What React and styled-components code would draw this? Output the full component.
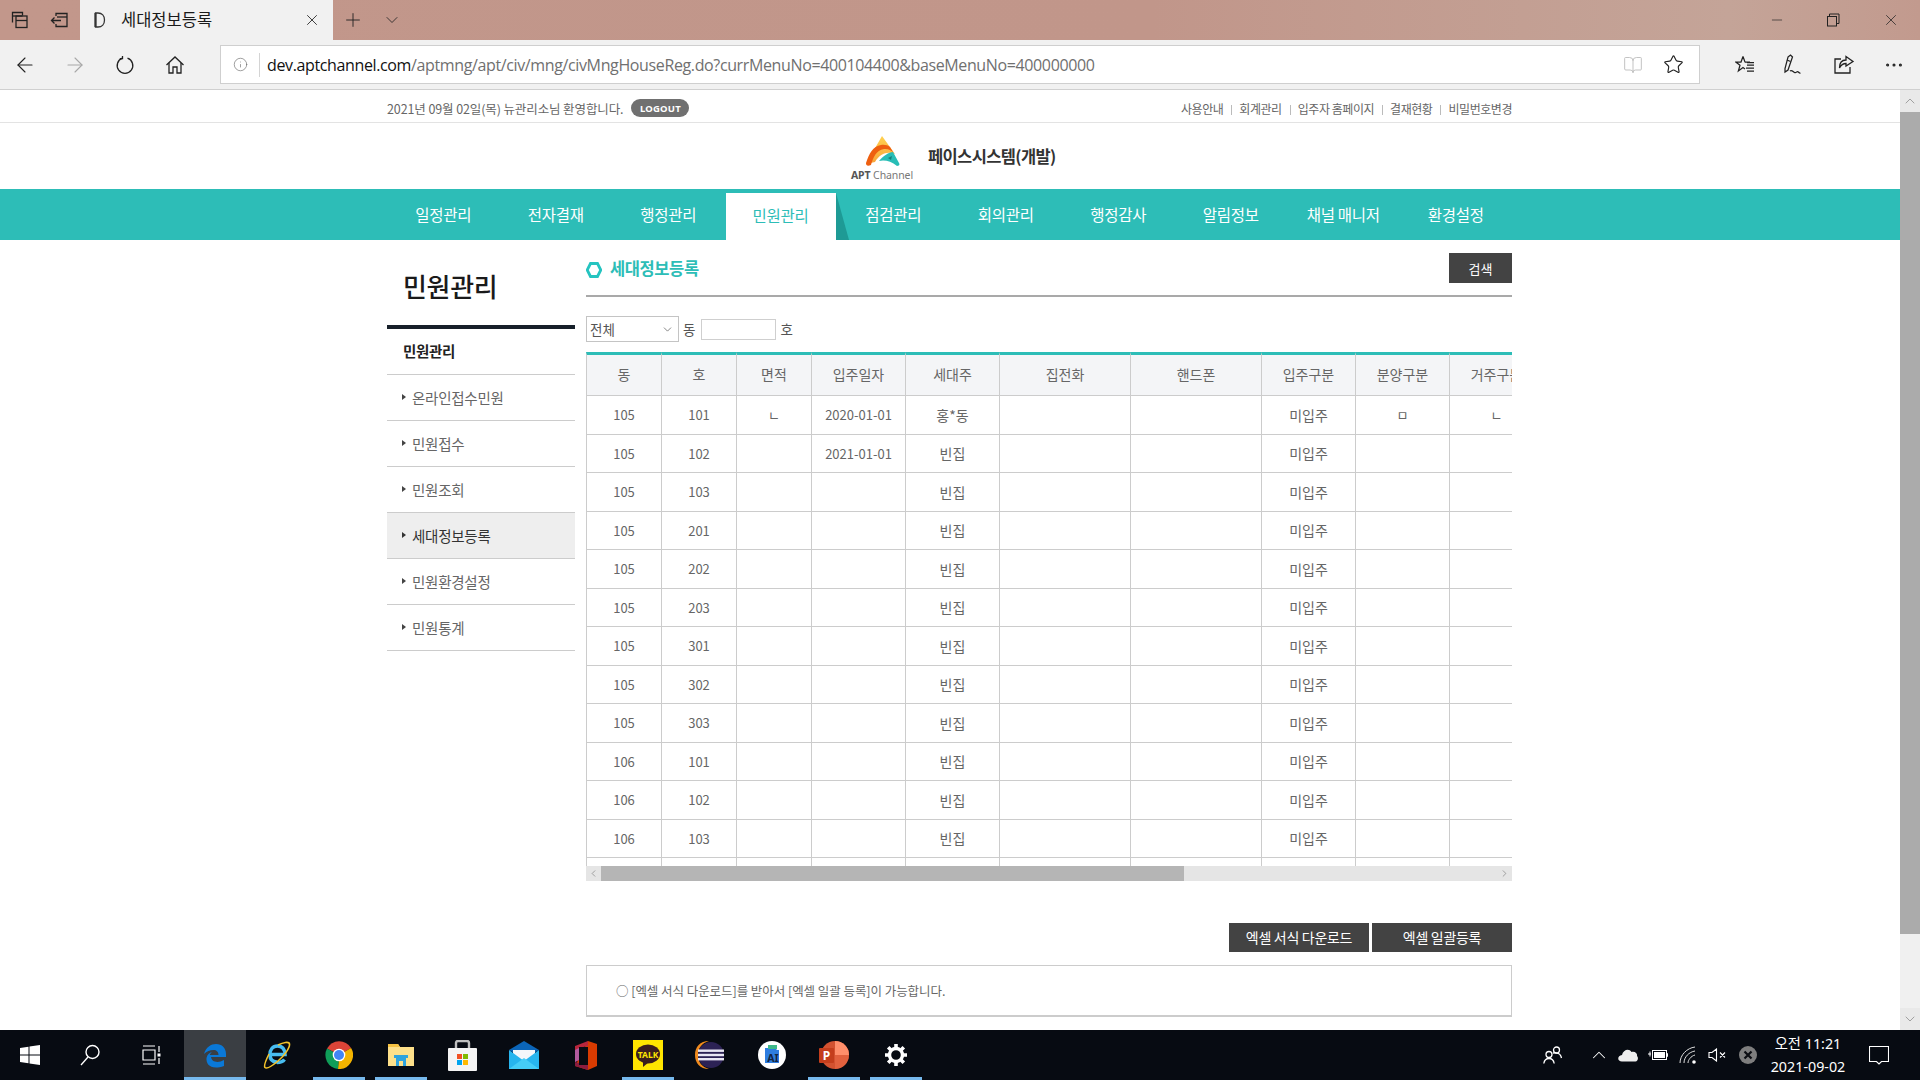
import React from 'react';
import styled, { createGlobalStyle } from 'styled-components';
import { ArrowLeft, ArrowRight, Info, Star, Plus, ChevronDown, X, Minus, ChevronUp, ChevronLeft, ChevronRight, MoreHorizontal, BookOpen } from 'lucide-react';

const KR = '"Noto Sans CJK KR", "Noto Sans", sans-serif';

const Global = createGlobalStyle`
  html, body { margin: 0; padding: 0; width: 1920px; height: 1080px; overflow: hidden; background: #fff; }
  body { font-family: ${KR}; }
  * { box-sizing: border-box; }
`;

const Screen = styled.div`
  width: 1920px; height: 1080px; display: flex; flex-direction: column; overflow: hidden;
`;

/* ---------- browser chrome ---------- */
const TitleBar = styled.div`
  height: 40px; flex: none; display: flex; align-items: stretch; color: #222;
  background: linear-gradient(90deg, #c2978b 0%, #c1968a 60%, #c4a498 90%, #c29a8e 100%);
`;
const TitleBtn = styled.div`
  width: ${p => p.$w || 40}px; display: flex; align-items: center; justify-content: center; flex: none;
`;
const Tab = styled.div`
  width: 253px; background: #f1f1f1; display: flex; align-items: center; flex: none; padding: 0 12px 0 14px; font-size: 16.5px; color: #1a1a1a;
`;
const TabTitle = styled.span`
  flex: 1; margin-left: 15px; margin-top: -2px;
`;
const TitleSpacer = styled.div`flex: 1;`;
const WinBtn = styled.div`
  width: 58px; margin-right: ${p => p.$mr || 0}px; display: flex; align-items: center; justify-content: center;
`;
const ToolBar = styled.div`
  height: 50px; flex: none; background: #f1f1f1; display: flex; align-items: center; border-bottom: 1px solid #d0d0d0;
`;
const NavBtn = styled.div`
  width: 50px; height: 40px; display: flex; align-items: center; justify-content: center; flex: none; color: ${p => p.$dim ? '#a8a8a8' : '#222'};
`;
const AddressBar = styled.div`
  width: 1480px; height: 39px; margin-left: 20px; padding-right: 5px; flex: none; background: #fff; border: 1px solid #cfcfcf; display: flex; align-items: center; color: #555;
`;
const AddrInfo = styled.div`
  width: 39px; height: 24px; display: flex; align-items: center; justify-content: center; border-right: 1px solid #d4d4d4; flex: none; color: #666;
`;
const Url = styled.div`
  flex: 1; font-family: "Open Sans", sans-serif; font-size: 16px; letter-spacing: -.37px; color: #707070; padding-left: 7px; white-space: nowrap;
`;
const UrlHost = styled.span`color: #111;`;
const AddrIcon = styled.div`
  width: 41px; display: flex; justify-content: center; color: ${p => p.$dim ? '#bdbdbd' : '#222'};
`;
const ToolIcons = styled.div`
  margin-left: 20px; display: flex;
`;
const ToolIcon = styled.div`
  width: 49.8px; display: flex; justify-content: center; align-items: center; color: #222;
`;

/* ---------- page ---------- */
const Viewport = styled.div`
  flex: 1; min-height: 0; display: flex; background: #fff; overflow: hidden;
`;
const Page = styled.div`
  flex: 1; min-width: 0; color: #666;
`;
const TopStrip = styled.div`
  height: 33px; border-bottom: 1px solid #e3e3e3; padding-top: 4px;
`;
const Wrap = styled.div`
  width: 1125px; margin-left: 387px; height: 100%; display: flex; align-items: center;
`;
const Welcome = styled.span`
  font-size: 12.5px; letter-spacing: -.11px; color: #666;
`;
const LogoutPill = styled.span`
  margin-left: 8px; width: 58px; height: 18px; border-radius: 9px; background: #707070; color: #fff; font-family: "Noto Sans", sans-serif;
  font-size: 9.5px; font-weight: 700; display: inline-flex; align-items: center; justify-content: center; letter-spacing: .2px;
`;
const TopLinks = styled.div`
  margin-left: auto; display: flex; align-items: center; font-size: 12px; letter-spacing: -.45px; color: #666;
`;
const TopLink = styled.span`
  & + & { margin-left: 8px; padding-left: 8px; position: relative; }
  & + &::before { content: ''; position: absolute; left: 0; top: 5px; height: 10px; width: 1px; background: #bbb; }
`;
const LogoRow = styled.div`
  height: 66px; display: flex; align-items: center; justify-content: flex-start; padding-left: 849px;
`;
const LogoMark = styled.div`
  width: 66px; display: flex; flex-direction: column; align-items: center; margin-top: 4px;
`;
const LogoWord = styled.div`
  font-family: "Noto Sans", sans-serif; font-size: 10.5px; line-height: 12px; letter-spacing: -.1px; color: #777; white-space: nowrap; margin-top: 2px;
`;
const LogoWordBold = styled.b`color: #555; font-weight: 700;`;
const SiteName = styled.div`
  margin-left: 13px; font-size: 16.5px; font-weight: 700; color: #333; letter-spacing: -.62px;
`;
const MainNav = styled.div`
  height: 51px; background: #2dbdb7;
`;
const NavList = styled.div`
  width: 1125px; margin-left: 387px; height: 100%; display: flex;
`;
const NavItem = styled.div`
  width: 112.5px; flex: none; position: relative; display: flex; align-items: center; justify-content: center;
  font-size: 15.5px; letter-spacing: -.3px; color: #fff; padding-bottom: 1px;
  ${p => p.$on && `
    background: #fff; color: #2dbdb7; margin-top: 4px; height: 47px; padding-bottom: 4px; width: 110px; margin-left: 1px; margin-right: 1.5px;
    &::after { content: ''; position: absolute; left: 100%; top: 0; border-left: 13px solid #1e9a95; border-top: 47px solid transparent; border-bottom: 0; }
  `}
`;
const Body = styled.div`
  width: 1125px; margin-left: 387px; display: flex; gap: 11px; align-items: flex-start;
`;
const Side = styled.aside`
  width: 188px; flex: none;
`;
const SideTitle = styled.div`
  padding: 28px 0 0 16px; font-size: 26px; line-height: 36px; font-weight: 500; color: #1a1a1a; letter-spacing: -.3px; border-bottom: 4px solid #17202a; height: 88.5px;
`;
const SideHead = styled.div`
  height: 46px; display: flex; align-items: center; padding-left: 16px; padding-bottom: 1px; border-bottom: 1px solid #ccc;
  font-size: 14.5px; font-weight: 700; color: #222; letter-spacing: -.3px;
`;
const SideItem = styled.div`
  height: 46px; display: flex; align-items: center; padding-left: 15px; border-bottom: 1px solid #ccc;
  font-size: 14.5px; letter-spacing: -.25px; color: ${p => p.$on ? '#333' : '#666'}; background: ${p => p.$on ? '#eeeeee' : '#fff'};
  &::before { content: ''; border-left: 4px solid ${p => p.$on ? '#333' : '#444'}; border-top: 3.5px solid transparent; border-bottom: 3.5px solid transparent; margin-right: 6px; }
`;
const Main = styled.main`
  flex: 1; min-width: 0;
`;
const Heading = styled.div`
  height: 45px; margin-top: 12px; border-bottom: 2px solid #a9a9a9; display: flex; align-items: flex-start; padding-top: 1px;
`;
const HexWrap = styled.div`
  margin-top: 9px; height: 16px; flex: none; line-height: 0;
`;
const HeadTitle = styled.div`
  margin-left: 8px; margin-top: 1px; font-size: 16.5px; line-height: 28px; font-weight: 700; color: #2dbdb7; letter-spacing: -.4px;
`;
const SearchBtn = styled.button`
  margin-left: auto; width: 63px; height: 30px; border: 0; background: #434343; color: #fff; font-family: ${KR}; font-size: 13px; padding: 0;
`;
const Filter = styled.div`
  display: flex; align-items: center; height: 26px; margin-top: 19px; font-size: 13.5px; color: #555;
`;
const SelectBox = styled.div`
  width: 93px; height: 26px; border: 1px solid #c4c4c4; display: flex; align-items: center; justify-content: space-between; padding: 0 4px 0 3px; font-size: 13.5px; color: #555;
`;
const FilterLabel = styled.span`margin-left: 4px;`;
const TextBox = styled.div`
  width: 75px; height: 21px; margin-left: 6px; border: 1px solid #cfcfcf;
`;
const TableClip = styled.div`
  margin-top: 10px; height: 514px; width: 926px; overflow: hidden;
`;
const Table = styled.table`
  border-collapse: separate; border-spacing: 0; table-layout: fixed; width: 958px;
`;
const Th = styled.th`
  height: 44px; background: #f4f5f7; border-top: 3px solid #2dbdb7; border-right: 1px solid #ccc; border-bottom: 1px solid #ccc;
  ${p => p.$first && 'border-left: 1px solid #ccc;'}
  font-size: 14px; font-weight: 400; color: #666; padding: 0 0 3px; overflow: hidden; white-space: nowrap; text-align: center;
`;
const Td = styled.td`
  height: 38.5px; border-right: 1px solid #ccc; border-bottom: 1px solid #ccc;
  ${p => p.$first && 'border-left: 1px solid #ccc;'}
  font-size: ${p => p.$ko ? 14 : 13}px; color: #666; padding: 0; text-align: center; white-space: nowrap;
`;
const HScroll = styled.div`
  height: 15px; width: 926px; background: #e5e5e5; display: flex; align-items: center; justify-content: space-between; color: #666; position: relative;
`;
const HThumb = styled.div`
  position: absolute; left: 15px; top: 0; bottom: 0; width: 583px; background: #b5b5b5;
`;
const ArrowCell = styled.span`
  width: 15px; height: 15px; display: flex; align-items: center; justify-content: center; background: #e5e5e5;
`;
const BtnRow = styled.div`
  display: flex; justify-content: flex-end; gap: 3px; margin-top: 42px;
`;
const DarkBtn = styled.button`
  width: 140px; height: 29px; border: 0; background: #434343; color: #fff; font-family: ${KR}; font-size: 14px; letter-spacing: -.3px; padding: 0 0 1px;
`;
const Notice = styled.div`
  margin-top: 13px; height: 52px; border: 1px solid #ccc; border-bottom-width: 2px; display: flex; align-items: center; padding-left: 29px; font-size: 12.5px; letter-spacing: -.05px; color: #666;
`;
const PageBar = styled.div`
  width: 20px; flex: none; background: #f0f0f0; display: flex; flex-direction: column; align-items: center;
`;
const PageBarEnd = styled.div`
  height: 22px; width: 100%; display: flex; align-items: center; justify-content: center; color: #a0a0a0; background: #e9e9e9; flex: none;
`;
const PageThumb = styled.div`
  height: 822px; width: 100%; background: #ababab; flex: none;
`;
const PageBarGap = styled.div`flex: 1;`;

/* ---------- taskbar ---------- */
const Taskbar = styled.div`
  height: 50px; flex: none; background: #070b12; display: flex; color: #fff;
`;
const TaskItem = styled.div`
  width: ${p => p.$w || 61.9}px; flex: none; height: 50px; display: flex; align-items: center; justify-content: center; position: relative;
  background: ${p => p.$active ? '#3a3e43' : 'transparent'};
  ${p => p.$run && `&::after { content: ''; position: absolute; left: ${p.$active ? 0 : 5}px; right: ${p.$active ? 0 : 5}px; bottom: 0; height: 3px; background: #76b9ed; }`}
`;
const Tray = styled.div`
  margin-left: auto; margin-right: 16px; display: flex; align-items: center; height: 100%;
`;
const TrayIcon = styled.div`
  width: ${p => p.$w || 30}px; margin-left: ${p => p.$ml || 0}px; flex: none; display: flex; justify-content: center; align-items: center;
`;
const Clock = styled.div`
  width: 90px; text-align: center; font-size: 14.3px; line-height: 23px; color: #fff; font-family: "Noto Sans", ${KR};
`;

const cols = [76, 75, 75, 94, 94, 131, 131, 94, 94, 94];
const heads = ['동', '호', '면적', '입주일자', '세대주', '집전화', '핸드폰', '입주구분', '분양구분', '거주구분'];
const rows = [
  ['105', '101', 'ㄴ', '2020-01-01', '홍*동', '', '', '미입주', 'ㅁ', 'ㄴ'],
  ['105', '102', '', '2021-01-01', '빈집', '', '', '미입주', '', ''],
  ...[['105', '103'], ['105', '201'], ['105', '202'], ['105', '203'], ['105', '301'], ['105', '302'], ['105', '303'], ['106', '101'], ['106', '102'], ['106', '103']]
    .map(([d, h]) => [d, h, '', '', '빈집', '', '', '미입주', '', '']),
  ['', '', '', '', '', '', '', '', '', ''],
];

const TabsIcon = () => (
  <svg width="20" height="20" viewBox="0 0 20 20" fill="none" stroke="#222" strokeWidth="1.3"><path d="M2.5 12.5V2.5h10v3" /><path d="M2.5 6h10" /><rect x="6" y="6" width="11" height="11.5" fill="none" /><path d="M6 10.5h11" /></svg>
);
const BackTabIcon = () => (
  <svg width="20" height="20" viewBox="0 0 20 20" fill="none" stroke="#222" strokeWidth="1.3"><path d="M6 6V3.5h11v13H6V14" /><path d="M17 7H7" /><path d="M11 10.5H1.5M4.5 7.5l-3 3 3 3" /></svg>
);
const Favicon = () => (
  <svg width="12" height="18" viewBox="0 0 12 18" fill="none" stroke="#333" strokeWidth="1.3"><path d="M1.5 2h2.5c4 0 6.5 3 6.5 7s-2.5 7-6.5 7H1.5z" /><path d="M1.5 2v14" strokeWidth="2.2" /></svg>
);
const RestoreIcon = () => (
  <svg width="14" height="14" viewBox="0 0 14 14" fill="none" stroke="#222" strokeWidth="1"><rect x="1.5" y="3.5" width="9" height="9.5" /><path d="M3.5 3.5V1h9.500v9.500h-2.500" /></svg>
);
const HomeLine = () => (
  <svg width="20" height="20" viewBox="0 0 20 20" fill="none" stroke="#222" strokeWidth="1.3"><path d="M1.5 10 10 2l8.500 8" /><path d="M4 8v10h4v-6h4v6h4V8" /></svg>
);
const RefreshIcon = () => (
  <svg width="20" height="20" viewBox="0 0 20 20" fill="none" stroke="#222" strokeWidth="1.3"><path d="M12.5 3.2a7.800 7.800 0 1 1-5 0" /><path d="M7.500 1v2.600H4.800" /></svg>
);
const FavListIcon = () => (
  <svg width="20" height="20" viewBox="0 0 20 20" fill="none" stroke="#222" strokeWidth="1.25"><path d="M8 1.500 10 7h-.2H15M8 1.500 6 7H.8l4.200 3.200L3.400 16l4.600-3.400 2 1.400" /><path d="M12 10h7M11 13h8M12 16h7M12 7.500h7" /></svg>
);
const PenIcon = () => (
  <svg width="24" height="22" viewBox="0 0 24 22" fill="none" stroke="#222" strokeWidth="1.25"><path d="M5 3 7.500 1 9.500 3 5 16l-3 2 0-3.500z" /><path d="M7 17c1.500-1.500 3 .5 4.500 1.500s2-1 3-1 1.500 2 3 1.500" /><path d="M4 6l3.500 1.500" /></svg>
);
const ShareIcon = () => (
  <svg width="22" height="20" viewBox="0 0 22 20" fill="none" stroke="#222" strokeWidth="1.3"><path d="M8 4H2v14h15v-6" /><path d="M13 1.500 20 6.500 13 11V8.500c-3 0-5 1.500-6.500 4.500 0-5 2.500-8 6.500-8z" /></svg>
);
const Hexagon = () => (
  <svg width="16" height="16" viewBox="0 0 16 16" fill="none"><path d="M4.500 1.500h7L14.800 8l-3.300 6.500h-7L1.200 8z" stroke="#25c4c0" strokeWidth="2.800" /></svg>
);
const LogoSvg = () => (
  <svg width="36" height="31" viewBox="0 0 36 31">
    <defs><linearGradient id="lgY" x1="0" y1="0" x2="0" y2="1"><stop offset="0" stopColor="#ffd24f" /><stop offset="1" stopColor="#f8a33b" /></linearGradient></defs>
    <path d="M18 0 L2 28 L11 26 C16 17 24 15 31 18 Z" fill="url(#lgY)" />
    <path d="M17 9C9 10 5 18 2 27Q2 31 7 29 C9 22 12 14 20 13 C24 12.500 27 14 29 16 L26 11 C24 9 20 8.500 17 9Z" fill="#ee5f10" />
    <path d="M15 25 C19 20 25 16 29 16 L35 27 Q36.500 30 33 30 Q24 23 15 25Z" fill="#28bdb6" />
    <path d="M24 22l4-2-1 4z" fill="#12807b" />
  </svg>
);
const WinLogo = () => (
  <svg width="20" height="20" viewBox="0 0 20 20" fill="#fff"><path d="M0 3l8.500-1.200v7.700H0zM9.500 1.600 20 0v9.500H9.500zM0 10.500h8.500v7.700L0 17zM9.500 10.500H20V20L9.500 18.400z" /></svg>
);
const TaskView = () => (
  <svg width="20" height="20" viewBox="0 0 20 20" fill="none" stroke="#fff" strokeWidth="1.2"><path d="M1 1h12M1 19h12M1 5h12v10H1zM17 1v6M17 13v6" /><rect x="15.500" y="8.500" width="3" height="3" fill="#fff" stroke="none" /></svg>
);
const SearchGlass = () => (
  <svg width="22" height="22" viewBox="0 0 22 22" fill="none" stroke="#fff" strokeWidth="1.4"><circle cx="13.500" cy="8" r="6.500" /><path d="M9 13 2 21" /></svg>
);
const EdgeIcon = () => (
  <svg width="24" height="25" viewBox="0 0 24 25"><path d="M1 11C3 4 8 1 13 1c6 0 10 4 10 10v3H8c.5 5 7 6.500 13 3v6c-3 1.500-6 1.500-8 1.500C6 24.500 3 20 3.500 15c.5-3 3-5.500 5.500-6-1.200 1-2 2-2.200 3h8.700c0-3-2-5-5-5C7 7 3.500 8.500 1 11z" fill="#0a78d7" /></svg>
);
const IEIcon = () => (
  <svg width="30" height="30" viewBox="0 0 30 30" fill="none">
    <path d="M15 22c-5 0-7-3-7-7.500S10.500 6 15.500 6 23 9.500 23 14.500H9M22.500 19.500c-1.500 2-4 3-7.500 3" stroke="#48bdf0" strokeWidth="3.600" />
    <path d="M7 14C4 20 1.500 26 3 27.500 4.500 29 10 26 16 21c6-5 12-13 11.500-17C27 1 21 2.500 16 5" stroke="#f4c32a" strokeWidth="1.600" />
  </svg>
);
const ChromeIcon = () => (
  <svg width="28" height="28" viewBox="0 0 28 28">
    <path d="M14 14 2 7.500A14 14 0 0 1 26.100 7z" fill="#db4437" />
    <path d="M14 14 26.100 7A14 14 0 0 1 13 28z" fill="#f4b400" />
    <path d="M14 14 13 28A14 14 0 0 1 2 7.500z" fill="#0f9d58" />
    <circle cx="14" cy="14" r="6.300" fill="#fff" /><circle cx="14" cy="14" r="5" fill="#4285f4" />
  </svg>
);
const FolderIcon = () => (
  <svg width="28" height="24" viewBox="0 0 28 24">
    <path d="M1 1h10l2 3h14v19H1z" fill="#fde08a" /><path d="M1 1h10l2 3H1z" fill="#f5c242" />
    <path d="M9 23V13h10v10h-3v-5h-4v5z" fill="#2fa3dd" /><rect x="7" y="12" width="14" height="3" fill="#2fa3dd" />
  </svg>
);
const StoreIcon = () => (
  <svg width="29" height="31" viewBox="0 0 29 31">
    <path d="M8 9V3q0-2 2-2h9q2 0 2 2v6" fill="none" stroke="#bfbfbf" strokeWidth="2.400" />
    <rect x="0" y="8" width="29" height="23" rx="1" fill="#f4f4f4" />
    <rect x="9" y="14" width="5" height="5" fill="#f25022" /><rect x="15" y="14" width="5" height="5" fill="#7fba00" />
    <rect x="9" y="20" width="5" height="5" fill="#00a4ef" /><rect x="15" y="20" width="5" height="5" fill="#ffb900" />
  </svg>
);
const MailIcon = () => (
  <svg width="30" height="29" viewBox="0 0 30 29">
    <path d="M0 9 15 0l15 9-15 9z" fill="#0b65b8" /><path d="M4 9h22v8l-11 5-11-5z" fill="#f4f7fa" />
    <path d="M0 9l15 11L30 9v19H0z" fill="#27b5ee" /><path d="M0 28 15 17l15 11z" fill="#45cdf7" />
  </svg>
);
const OfficeIcon = () => (
  <svg width="24" height="29" viewBox="0 0 24 29">
    <path d="M14 0 23 3v22l-9 4-13-4z" fill="#d83b01" /><path d="M14 0 1 5v16l4-2V7l9-2z" fill="#b7263c" /><path d="M1 21l13 3 0 5-13-4z" fill="#8b1c3f" />
    <rect x="5" y="6" width="9" height="18" fill="#070b12" /><path d="M1 9l4-2v12l-4 2z" fill="#b15a9e" />
  </svg>
);
const KakaoIcon = () => (
  <svg width="30" height="30" viewBox="0 0 30 30">
    <rect width="30" height="30" fill="#ffe500" />
    <ellipse cx="15" cy="14" rx="12" ry="9.500" fill="#3a1d1d" /><path d="M10 21l0 6 6-5z" fill="#3a1d1d" />
    <text x="15" y="17.500" fontSize="8.500" fontWeight="700" fill="#ffe500" textAnchor="middle" fontFamily="Noto Sans, sans-serif">TALK</text>
  </svg>
);
const EclipseIcon = () => (
  <svg width="30" height="28" viewBox="0 0 30 28">
    <path d="M14 0C5 0 0 6 0 14s5 14 14 14C7 26 3 21 3 14S7 2 14 0z" fill="#f08a1d" />
    <circle cx="16" cy="14" r="13" fill="#2c2255" />
    <rect x="3" y="8.500" width="26" height="2.400" fill="#e9e7f3" /><rect x="3" y="12.800" width="26" height="2.400" fill="#e9e7f3" /><rect x="3" y="17" width="26" height="2.400" fill="#e9e7f3" />
  </svg>
);
const AppIcon = () => (
  <svg width="28" height="28" viewBox="0 0 28 28">
    <circle cx="14" cy="14" r="14" fill="#fff" />
    <path d="M7 7h10l2 2h2v13H7z" fill="#2e7de0" /><path d="M10 4h9v4h-9z" fill="#3fb98a" />
    <text x="15" y="20.500" fontSize="10.500" fontWeight="700" fill="#13233f" textAnchor="middle" fontFamily="Noto Sans, sans-serif">AI</text>
  </svg>
);
const PptIcon = () => (
  <svg width="30" height="28" viewBox="0 0 30 28">
    <circle cx="16" cy="14" r="14" fill="#d35230" /><path d="M16 0a14 14 0 0 1 14 14H16z" fill="#ff8f6b" />
    <path d="M16 14h14a14 14 0 0 1-14 14z" fill="#ed6c47" opacity=".6" />
    <rect x="0" y="7" width="15" height="15" rx="1" fill="#c43e1c" />
    <text x="7.500" y="19" fontSize="12" fontWeight="700" fill="#fff" textAnchor="middle" fontFamily="Noto Sans, sans-serif">P</text>
  </svg>
);
const GearIcon = () => (
  <svg width="24" height="24" viewBox="0 0 24 24" fill="none" stroke="#fff">
    <circle cx="12" cy="12" r="6.500" strokeWidth="3.400" />
    <path d="M12 1v5M12 18v5M1 12h5M18 12h5M4.200 4.200l3.500 3.500M16.300 16.300l3.500 3.500M4.200 19.800l3.500-3.500M16.300 7.700l3.500-3.500" strokeWidth="3.600" />
  </svg>
);
const PeopleIcon = () => (
  <svg width="20" height="20" viewBox="0 0 20 20" fill="none" stroke="#fff" strokeWidth="1.300"><circle cx="6" cy="9.500" r="3" /><path d="M.8 18.500c.5-3 2.500-5 5.200-5s4.700 2 5.200 5" /><circle cx="13.500" cy="5" r="3" /><path d="M10 8c1-.2 2.500-.2 3.500 0 2.500 0 4.500 2.500 5 5" /></svg>
);
const CloudIcon = () => (
  <svg width="20" height="14" viewBox="0 0 20 14" fill="#eee"><path d="M4 13.500c-5 0-5-6 0-6.500C5 2 11 0 13.500 4c4-1 6 2 5.500 4 2 2 .5 5.500-1.500 5.500z" /></svg>
);
const BatteryIcon = () => (
  <svg width="20" height="14" viewBox="0 0 20 14" fill="none" stroke="#fff"><rect x="4.500" y="2.500" width="14" height="9" /><rect x="6" y="4" width="11" height="6" fill="#fff" stroke="none" /><path d="M18.500 5.500h1v3h-1M0 6h3M2 3.500v5" /></svg>
);
const WifiIcon = () => (
  <svg width="18" height="18" viewBox="0 0 18 18" fill="none" stroke="#ddd" strokeWidth="1"><path d="M1 17C1 9 8 2 16 1M5 17c0-6 5-11 11-12M9 17c0-3 3-7 7-8" /><circle cx="15" cy="16" r="1.800" fill="#fff" stroke="none" /></svg>
);
const MuteIcon = () => (
  <svg width="20" height="14" viewBox="0 0 20 14" fill="none" stroke="#fff" strokeWidth="1.100"><path d="M1 4.500h3L8.500 1v12L4 9.500H1zM12 4.500l5 5M17 4.500l-5 5" /></svg>
);
const ErrorIcon = () => (
  <svg width="18" height="18" viewBox="0 0 18 18"><circle cx="9" cy="9" r="9" fill="#7e7e7e" /><path d="M5.500 5.500l7 7M12.500 5.500l-7 7" stroke="#0b0d12" strokeWidth="2.200" /></svg>
);
const BubbleIcon = () => (
  <svg width="20" height="19" viewBox="0 0 20 19" fill="none" stroke="#fff" strokeWidth="1.100"><path d="M.5.500h19v15h-7L10 18l-2.500-2.500h-7z" /></svg>
);

export default function App() {
  return (
    <Screen>
      <Global />
      <TitleBar>
        <TitleBtn><TabsIcon /></TitleBtn>
        <TitleBtn><BackTabIcon /></TitleBtn>
        <Tab>
          <Favicon />
          <TabTitle>세대정보등록</TabTitle>
          <X size={18} strokeWidth={1.1} />
        </Tab>
        <TitleBtn $w={40}><Plus size={22} strokeWidth={1} /></TitleBtn>
        <TitleBtn $w={38}><ChevronDown size={20} strokeWidth={1} /></TitleBtn>
        <TitleSpacer />
        <WinBtn $mr={-2}><Minus size={16} strokeWidth={1} /></WinBtn>
        <WinBtn><RestoreIcon /></WinBtn>
        <WinBtn><X size={18} strokeWidth={1} /></WinBtn>
      </TitleBar>
      <ToolBar>
        <NavBtn><ArrowLeft size={24} strokeWidth={1.1} /></NavBtn>
        <NavBtn $dim><ArrowRight size={24} strokeWidth={1.1} /></NavBtn>
        <NavBtn><RefreshIcon /></NavBtn>
        <NavBtn><HomeLine /></NavBtn>
        <AddressBar>
          <AddrInfo><Info size={15} strokeWidth={1} /></AddrInfo>
          <Url><UrlHost>dev.aptchannel.com</UrlHost>/aptmng/apt/civ/mng/civMngHouseReg.do?currMenuNo=400104400&amp;baseMenuNo=400000000</Url>
          <AddrIcon $dim><BookOpen size={20} strokeWidth={1.1} /></AddrIcon>
          <AddrIcon><Star size={21} strokeWidth={1.3} /></AddrIcon>
        </AddressBar>
        <ToolIcons>
          <ToolIcon><FavListIcon /></ToolIcon>
          <ToolIcon><PenIcon /></ToolIcon>
          <ToolIcon><ShareIcon /></ToolIcon>
          <ToolIcon><MoreHorizontal size={22} strokeWidth={1.4} /></ToolIcon>
        </ToolIcons>
      </ToolBar>
      <Viewport>
        <Page>
          <TopStrip>
            <Wrap>
              <Welcome>2021년 09월 02일(목) 뉴관리소님 환영합니다.</Welcome>
              <LogoutPill>LOGOUT</LogoutPill>
              <TopLinks>
                {['사용안내', '회계관리', '입주자 홈페이지', '결재현황', '비밀번호변경'].map(t => <TopLink key={t}>{t}</TopLink>)}
              </TopLinks>
            </Wrap>
          </TopStrip>
          <LogoRow>
            <LogoMark>
              <LogoSvg />
              <LogoWord><LogoWordBold>APT</LogoWordBold> Channel</LogoWord>
            </LogoMark>
            <SiteName>페이스시스템(개발)</SiteName>
          </LogoRow>
          <MainNav>
            <NavList>
              {['일정관리', '전자결재', '행정관리', '민원관리', '점검관리', '회의관리', '행정감사', '알림정보', '채널 매니저', '환경설정'].map(t => (
                <NavItem key={t} $on={t === '민원관리'}>{t}</NavItem>
              ))}
            </NavList>
          </MainNav>
          <Body>
            <Side>
              <SideTitle>민원관리</SideTitle>
              <SideHead>민원관리</SideHead>
              {['온라인접수민원', '민원접수', '민원조회', '세대정보등록', '민원환경설정', '민원통계'].map(t => (
                <SideItem key={t} $on={t === '세대정보등록'}>{t}</SideItem>
              ))}
            </Side>
            <Main>
              <Heading>
                <HexWrap><Hexagon /></HexWrap>
                <HeadTitle>세대정보등록</HeadTitle>
                <SearchBtn>검색</SearchBtn>
              </Heading>
              <Filter>
                <SelectBox>전체<ChevronDown size={13} strokeWidth={1.3} /></SelectBox>
                <FilterLabel>동</FilterLabel>
                <TextBox />
                <FilterLabel>호</FilterLabel>
              </Filter>
              <TableClip>
                <Table>
                  <colgroup>{cols.map((w, i) => <col key={i} style={{ width: w }} />)}</colgroup>
                  <thead>
                    <tr>{heads.map((h, i) => <Th key={h} $first={i === 0}>{h}</Th>)}</tr>
                  </thead>
                  <tbody>
                    {rows.map((r, ri) => (
                      <tr key={ri}>{r.map((c, ci) => <Td key={ci} $first={ci === 0} $ko={/[가-힣]/.test(c)}>{c}</Td>)}</tr>
                    ))}
                  </tbody>
                </Table>
              </TableClip>
              <HScroll>
                <ArrowCell><ChevronLeft size={11} strokeWidth={1.2} /></ArrowCell>
                <HThumb />
                <ArrowCell><ChevronRight size={11} strokeWidth={1.2} /></ArrowCell>
              </HScroll>
              <BtnRow>
                <DarkBtn>엑셀 서식 다운로드</DarkBtn>
                <DarkBtn>엑셀 일괄등록</DarkBtn>
              </BtnRow>
              <Notice>○ [엑셀 서식 다운로드]를 받아서 [엑셀 일괄 등록]이 가능합니다.</Notice>
            </Main>
          </Body>
        </Page>
        <PageBar>
          <PageBarEnd><ChevronUp size={16} strokeWidth={1.5} /></PageBarEnd>
          <PageThumb />
          <PageBarGap />
          <PageBarEnd><ChevronDown size={16} strokeWidth={1.5} /></PageBarEnd>
        </PageBar>
      </Viewport>
      <Taskbar>
        <TaskItem $w={60}><WinLogo /></TaskItem>
        <TaskItem $w={60}><SearchGlass /></TaskItem>
        <TaskItem $w={64}><TaskView /></TaskItem>
        <TaskItem $active $run><EdgeIcon /></TaskItem>
        <TaskItem><IEIcon /></TaskItem>
        <TaskItem $run><ChromeIcon /></TaskItem>
        <TaskItem $run><FolderIcon /></TaskItem>
        <TaskItem><StoreIcon /></TaskItem>
        <TaskItem><MailIcon /></TaskItem>
        <TaskItem><OfficeIcon /></TaskItem>
        <TaskItem $run><KakaoIcon /></TaskItem>
        <TaskItem><EclipseIcon /></TaskItem>
        <TaskItem><AppIcon /></TaskItem>
        <TaskItem $run><PptIcon /></TaskItem>
        <TaskItem $run><GearIcon /></TaskItem>
        <Tray>
          <TrayIcon><PeopleIcon /></TrayIcon>
          <TrayIcon $w={28} $ml={17}><ChevronUp size={22} strokeWidth={1.1} color="#fff" /></TrayIcon>
          <TrayIcon><CloudIcon /></TrayIcon>
          <TrayIcon><BatteryIcon /></TrayIcon>
          <TrayIcon><WifiIcon /></TrayIcon>
          <TrayIcon><MuteIcon /></TrayIcon>
          <TrayIcon><ErrorIcon /></TrayIcon>
          <Clock>오전 11:21<br />2021-09-02</Clock>
          <TrayIcon $w={50} $ml={1}><BubbleIcon /></TrayIcon>
        </Tray>
      </Taskbar>
    </Screen>
  );
}
